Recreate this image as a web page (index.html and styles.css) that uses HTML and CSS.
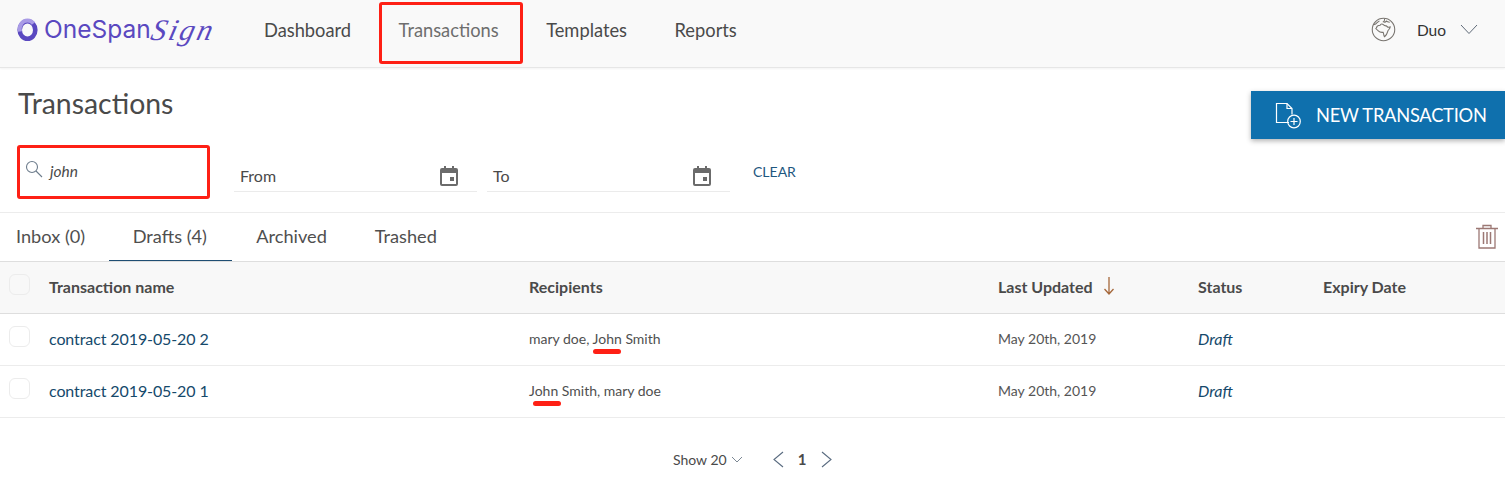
FILE: index.html
```html
<!DOCTYPE html>
<html lang="en">
<head>
<meta charset="utf-8">
<title>Transactions</title>
<link rel="stylesheet" href="styles.css">
</head>
<body>
<header class="topbar">
  <div class="logo">
    <svg class="logo-mark" width="21" height="24" viewBox="0 0 21 24"><ellipse cx="10.500" cy="12" rx="7.800" ry="8.800" fill="none" stroke="#5a48c0" stroke-width="4.600"/><path d="M3 13.500C1.800 7 5.500 2.500 10.500 2.500c2.500 0 4.500 1 6 3" fill="none" stroke="#a99be6" stroke-width="4"/></svg>
    <span class="logo-word">OneSpan</span><span class="logo-script">Sign</span>
  </div>
  <nav class="nav">
    <a class="nav-link">Dashboard</a>
    <a class="nav-link nav-active">Transactions<span class="mark mark-nav"></span></a>
    <a class="nav-link">Templates</a>
    <a class="nav-link">Reports</a>
  </nav>
  <div class="user">
    <svg width="25" height="25" viewBox="0 0 26 26" fill="none" stroke="#77736e" stroke-width="1.100"><circle cx="13" cy="13" r="11.700"/><path d="M5.500 11.500C6 9.500 8 8.500 9.500 8.500c.8-1.500 2.300-1.500 3.300-.6.700.8 1.800 1.400 2.900 1.300 1 .5 1.300 1.500 2.600 1.500l1.700-.4c-.2 1.800-1.500 2.700-2.300 3.800-.6 2-1.400 5-3.700 6.400-1-1.500-.6-3.200-1.400-4.600-1.700.2-3.700-.1-5-1.500-.9-.8-2-1.600-2.600-2.400z"/><path d="M14 1.800c.8 1.400-.2 2.400-1.200 3.200 1.200.6 2.600.2 3.300-.7.800 1 2.100 1 3.400 1.100M2.800 8c1.500-.2 2.800-1 3.700-2.300.7-.6 1.500-1 2.300-1.600"/></svg>
    <span class="user-name">Duo</span>
    <svg width="18" height="11" viewBox="0 0 18 11" fill="none" stroke="#5f6a78" stroke-width="1"><path d="M1 1l8 8.500 8-8.500"/></svg>
  </div>
</header>

<section class="title-row">
  <h1 class="title">Transactions</h1>
  <button class="new-btn">
    <svg width="27" height="27" viewBox="0 0 27 27" fill="none" stroke="#fff" stroke-width="1.200"><path d="M14 20.500H1.500V1.500H12l5 5v6"/><path d="M12 1.500v5h5"/><circle cx="19" cy="19.500" r="6.300"/><path d="M19 16v7M15.500 19.500h7"/></svg>
    <span>NEW TRANSACTION</span>
  </button>
</section>

<section class="filters">
  <div class="search">
    <svg width="18" height="18" viewBox="0 0 18 18" fill="none" stroke="#6d7c8c" stroke-width="1.100"><circle cx="7" cy="7" r="5.500"/><path d="M11 11l6 6"/></svg>
    <span class="search-text">john</span>
    <span class="mark mark-search"></span>
  </div>
  <div class="date date-from">
    <span>From</span>
    <svg class="cal" width="18" height="20" viewBox="0 0 18 20"><path fill="#6b6b6b" d="M4 0h2v2h6V0h2v2h2a2 2 0 0 1 2 2v14a2 2 0 0 1-2 2H2a2 2 0 0 1-2-2V4a2 2 0 0 1 2-2h2zM2 7v11h14V7zm8 4h4v4h-4z"/></svg>
  </div>
  <div class="date date-to">
    <span>To</span>
    <svg class="cal" width="18" height="20" viewBox="0 0 18 20"><path fill="#6b6b6b" d="M4 0h2v2h6V0h2v2h2a2 2 0 0 1 2 2v14a2 2 0 0 1-2 2H2a2 2 0 0 1-2-2V4a2 2 0 0 1 2-2h2zM2 7v11h14V7zm8 4h4v4h-4z"/></svg>
  </div>
  <a class="clear">CLEAR</a>
</section>

<section class="tabs">
  <a class="tab tab-first">Inbox (0)</a>
  <a class="tab tab-active">Drafts (4)</a>
  <a class="tab">Archived</a>
  <a class="tab">Trashed</a>
  <svg class="trash" width="22" height="25" viewBox="0 0 22 25" fill="none" stroke="#9c7874" stroke-width="1.300"><path d="M0 4.500h22M7 4.500V1.500h8v3M3 4.500v19.500h16V4.500"/><path d="M7.500 8v12M11 8v12M14.500 8v12" stroke-width="1.500"/></svg>
</section>

<section class="table">
  <div class="row head">
    <span class="check"></span>
    <span>Transaction name</span>
    <span>Recipients</span>
    <span class="sort">Last Updated
      <svg width="12" height="18" viewBox="0 0 12 18" fill="none" stroke="#a5673a" stroke-width="1.300"><path d="M6 0v16.500M1.500 12L6 17l4.500-5"/></svg>
    </span>
    <span>Status</span>
    <span>Expiry Date</span>
  </div>
  <div class="row">
    <span class="check"></span>
    <a class="name">contract 2019-05-20 2</a>
    <span class="people">mary doe, <span class="hit">John<span class="mark mark-hit"></span></span> Smith</span>
    <span class="when">May 20th, 2019</span>
    <em class="state">Draft</em>
    <span></span>
  </div>
  <div class="row">
    <span class="check"></span>
    <a class="name">contract 2019-05-20 1</a>
    <span class="people"><span class="hit">John<span class="mark mark-hit mark-hit-shift"></span></span> Smith, mary doe</span>
    <span class="when">May 20th, 2019</span>
    <em class="state">Draft</em>
    <span></span>
  </div>
</section>

<footer class="pager">
  <span class="show">Show 20</span>
  <svg class="show-caret" width="12" height="7" viewBox="0 0 12 7" fill="none" stroke="#7c8894" stroke-width="1"><path d="M1 1l5 5 5-5"/></svg>
  <svg class="arrow-left" width="12" height="17" viewBox="0 0 12 17" fill="none" stroke="#5a6c80" stroke-width="1.100"><path d="M11 1L2 8.500l9 7.500"/></svg>
  <strong class="page">1</strong>
  <svg class="arrow-right" width="12" height="17" viewBox="0 0 12 17" fill="none" stroke="#5a6c80" stroke-width="1.100"><path d="M1 1l9 7.500L1 16"/></svg>
</footer>
</body>
</html>
```
FILE: styles.css
```css
* { box-sizing: border-box; }
html, body { margin: 0; padding: 0; }
body {
  font-family: Lato, "Liberation Sans", sans-serif;
  color: #4a4a4a;
  background: #fff;
  width: 1505px;
  height: 488px;
  overflow: hidden;
}
.topbar {
  height: 68px;
  background: #f9f9f9;
  border-bottom: 1px solid #e6e6e6;
  box-shadow: 0 1px 2px rgba(0,0,0,.05);
  display: flex;
  align-items: center;
  padding: 0 27px 8px 17px;
}
.logo { width: 247px; display: flex; align-items: center; color: #5a48c0; }
.logo-mark { margin-right: 6px; flex: none; }
.logo-word { font-family: Inter, sans-serif; font-size: 24.500px; font-weight: 400; line-height: 1; }
.logo-script { display: inline-block; font-family: "Liberation Serif", serif; font-style: italic; font-size: 30px; line-height: 1; margin-left: 1px; letter-spacing: 2.500px; transform: skewX(-14deg); }
.nav { display: flex; gap: 47.500px; font-size: 18.300px; }
.nav-link { color: #4a4a4a; }
.nav-active { color: #6e6e6e; position: relative; }
.mark { position: absolute; pointer-events: none; }
.mark-nav { left: -20px; top: -17px; width: 144px; height: 62px; border: 3px solid #fe2015; border-radius: 3px; }
.user { margin-left: auto; display: flex; align-items: center; font-size: 15.500px; color: #333; }
.user-name { margin: 0 14px 0 21px; }
.title-row { display: flex; justify-content: space-between; align-items: flex-start; height: 71px; }
.title { margin: 17px 0 0 18px; font-size: 28.400px; font-weight: 400; line-height: 36px; color: #4a4a4a; }
.new-btn {
  margin-top: 23px;
  width: 254px;
  height: 48px;
  border: 0;
  background: #0f70ad;
  color: #fff;
  font: 400 18.300px Lato, sans-serif;
  letter-spacing: -.25px;
  display: flex;
  align-items: center;
  gap: 14px;
  padding: 0 0 0 24px;
  box-shadow: 0 2px 5px rgba(0,0,0,.3);
}
.filters { height: 74px; border-bottom: 1px solid #ececec; display: flex; align-items: flex-start; padding-left: 17px; }
.search { width: 193px; height: 54px; margin-top: 6px; position: relative; display: flex; align-items: flex-start; padding: 15px 0 0 8px; gap: 6px; }
.search-text { font-size: 15.500px; font-style: italic; line-height: 21px; margin: 1px 0 0 1px; }
.mark-search { inset: 0; border: 3px solid #fe2015; border-radius: 3px; }
.date { height: 53px; border-bottom: 1px solid #ebebeb; font-size: 16px; display: flex; align-items: flex-end; justify-content: space-between; padding: 0 19px 5px 6px; }
.date span { position: relative; top: -1px; }
.date-from { width: 243px; margin-left: 24px; }
.date-to { width: 243px; margin-left: 10px; }
.clear { margin: 24px 0 0 23px; font-size: 14px; line-height: 17px; color: #1e5780; }
.tabs { height: 49px; border-bottom: 1px solid #dedede; display: flex; font-size: 18.200px; padding-left: 16px; }
.tab { padding: 0 24px; line-height: 47px; height: 48px; color: #4f4f4f; }
.tab-first { padding: 0; margin-right: 23.500px; }
.tab-active { border-bottom: 1px solid #1f4e73; width: 123.500px; }
.trash { margin: 11px 7px 0 auto; }
.row {
  display: grid;
  grid-template-columns: 49px 480px 469px 200px 125px 182px;
  align-items: center;
  height: 52px;
  padding-bottom: 3px;
  border-bottom: 1px solid #ececec;
  font-size: 15px;
}
.head { background: #f8f8f8; font-weight: 700; font-size: 16px; border-bottom: 1px solid #dedede; color: #4a4a4a; }
.check { width: 21px; height: 21px; margin: -3px 0 0 9px; border: 1px solid #ececec; border-radius: 6px; background: #fff; }
.head .check { background: #f8f8f8; }
.sort { display: flex; align-items: center; gap: 10px; }
.name { color: #15496b; font-size: 16px; letter-spacing: -.1px; }
.people { font-size: 14px; color: #4f4f4f; }
.hit { position: relative; }
.mark-hit { left: 0; width: 28px; bottom: -7px; height: 5px; background: #fe2015; border-radius: 3px; }
.mark-hit-shift { left: 4px; }
.when { font-size: 14px; color: #555; }
.state { font-size: 16px; color: #15496b; }
.pager { display: flex; align-items: center; padding: 22px 0 0 673px; font-size: 14px; height: 60px; }
.show { color: #4a4a4a; }
.show-caret { margin-left: 4px; }
.arrow-left { margin-left: 29px; }
.page { margin: 0 15px 0 14px; font-size: 15px; }
```
